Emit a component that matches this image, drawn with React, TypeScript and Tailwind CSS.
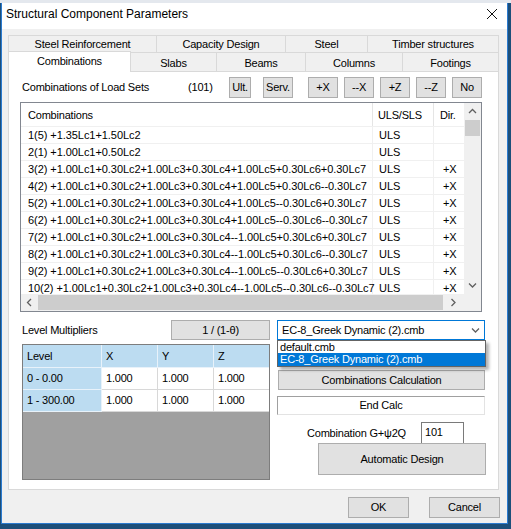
import React from 'react';

const rows: [string, string, string][] = [
  ['1(5) +1.35Lc1+1.50Lc2', 'ULS', ''],
  ['2(1) +1.00Lc1+0.50Lc2', 'ULS', ''],
  ['3(2) +1.00Lc1+0.30Lc2+1.00Lc3+0.30Lc4+1.00Lc5+0.30Lc6+0.30Lc7', 'ULS', '+X'],
  ['4(2) +1.00Lc1+0.30Lc2+1.00Lc3+0.30Lc4+1.00Lc5+0.30Lc6--0.30Lc7', 'ULS', '+X'],
  ['5(2) +1.00Lc1+0.30Lc2+1.00Lc3+0.30Lc4+1.00Lc5--0.30Lc6+0.30Lc7', 'ULS', '+X'],
  ['6(2) +1.00Lc1+0.30Lc2+1.00Lc3+0.30Lc4+1.00Lc5--0.30Lc6--0.30Lc7', 'ULS', '+X'],
  ['7(2) +1.00Lc1+0.30Lc2+1.00Lc3+0.30Lc4--1.00Lc5+0.30Lc6+0.30Lc7', 'ULS', '+X'],
  ['8(2) +1.00Lc1+0.30Lc2+1.00Lc3+0.30Lc4--1.00Lc5+0.30Lc6--0.30Lc7', 'ULS', '+X'],
  ['9(2) +1.00Lc1+0.30Lc2+1.00Lc3+0.30Lc4--1.00Lc5--0.30Lc6+0.30Lc7', 'ULS', '+X'],
  ['10(2) +1.00Lc1+0.30Lc2+1.00Lc3+0.30Lc4--1.00Lc5--0.30Lc6--0.30Lc7', 'ULS', '+X'],
];

const backTabs: [string, string][] = [
  ['Steel Reinforcement', 'w-[148px]'],
  ['Capacity Design', 'w-[129px]'],
  ['Steel', 'w-[82px]'],
  ['Timber structures', 'w-[132px]'],
];

const frontTabs: [string, string][] = [
  ['Combinations', 'w-[123px]'],
  ['Slabs', 'w-[86px]'],
  ['Beams', 'w-[89px]'],
  ['Columns', 'w-[97px]'],
  ['Footings', 'w-[96px]'],
];

const levels = [
  ['0 - 0.00', '1.000', '1.000', '1.000'],
  ['1 - 300.00', '1.000', '1.000', '1.000'],
];

// small chevron used by scrollbars and the combo box
const Chevron = ({ dir, className }: { dir: 'up' | 'down' | 'left' | 'right'; className?: string }) => {
  const d = {
    up: 'M1 6 L4.5 2.5 L8 6',
    down: 'M1 2.5 L4.5 6 L8 2.5',
    left: 'M6 1 L2.5 4.5 L6 8',
    right: 'M2.5 1 L6 4.5 L2.5 8',
  }[dir];
  return (
    <svg width="9" height="9" viewBox="0 0 9 9" className={className}>
      <path d={d} fill="none" stroke="#606060" strokeWidth="1.3" />
    </svg>
  );
};

const Btn = ({ label, className }: { label: string; className: string }) => (
  <div className={`flex items-center justify-center bg-[#e1e1e1] border border-[#adadad] text-black ${className}`}>
    {label}
  </div>
);

export default function App() {
  return (
    <div className="w-[511px] h-[529px] bg-[#1d4f7a] overflow-hidden font-['Liberation_Sans',Arial,sans-serif] text-[11px] text-black leading-none tracking-[-0.2px]">
      <div className="h-[3px] bg-[#e4e8ee]" />
      <div className="ml-[1px] w-[507px] h-[521px] border-x border-b border-[#2b7bd0] bg-[#f0f0f0] flex flex-col">
        {/* Title bar */}
        <div className="h-[26px] bg-white flex items-center justify-between pl-[4px] pr-[9px] pb-[4px]">
          <span className="text-[12px] tracking-normal">Structural Component Parameters</span>
          <svg width="12" height="12" viewBox="0 0 12 12">
            <path d="M1 1 L11 11 M11 1 L1 11" stroke="#111" strokeWidth="1" />
          </svg>
        </div>

        {/* Tab control */}
        <div className="pl-[6px] pt-[6px]">
          <div className="flex h-[17px]">
            {backTabs.map(([t, w]) => (
              <div key={t} className={`${w} border-t border-l last:border-r border-[#d9d9d9] bg-[#f0f0f0] flex items-center justify-center pt-[1px]`}>
                {t}
              </div>
            ))}
          </div>
          <div className="flex h-[19px] items-end">
            {frontTabs.map(([t, w], i) =>
              i === 0 ? (
                <div key={t} className={`${w} h-[21px] -mb-[1px] relative z-10 bg-white border-t border-l border-r border-[#d9d9d9] flex items-start justify-center pt-[4px]`}>
                  {t}
                </div>
              ) : (
                <div key={t} className={`${w} h-[19px] border-t border-r border-[#d9d9d9] bg-[#f0f0f0] flex items-center justify-center pt-[2px]`}>
                  {t}
                </div>
              )
            )}
          </div>

          {/* Tab page */}
          <div className="w-[491px] h-[419px] bg-white border border-[#d9d9d9] pl-[11px]">
            {/* Load set row */}
            <div className="flex items-center h-[21px] mt-[5px]">
              <span className="ml-[2px] w-[166px]">Combinations of Load Sets</span>
              <span className="w-[41px]">(101)</span>
              <Btn label="Ult." className="w-[22px] h-[21px]" />
              <Btn label="Serv." className="w-[30px] h-[21px] ml-[12px]" />
              <Btn label="+X" className="w-[30px] h-[21px] ml-[15px]" />
              <Btn label="--X" className="w-[30px] h-[21px] ml-[6px]" />
              <Btn label="+Z" className="w-[30px] h-[21px] ml-[6px]" />
              <Btn label="--Z" className="w-[30px] h-[21px] ml-[6px]" />
              <Btn label="No" className="w-[30px] h-[21px] ml-[6px]" />
            </div>

            {/* Combinations list */}
            <div className="mt-[4px] w-[462px] h-[210px] border border-[#828790] flex">
              <div className="w-[443px] flex flex-col">
                <div className="h-[23px] flex items-center">
                  <div className="w-[352px] h-full flex items-center pl-[7px] pt-[1px] border-r border-[#e5e5e5]">Combinations</div>
                  <div className="w-[61px] h-full flex items-center pl-[5px] pt-[1px] border-r border-[#e5e5e5]">ULS/SLS</div>
                  <div className="w-[30px] h-full flex items-center pl-[6px] pt-[1px]">Dir.</div>
                </div>
                <div className="h-[168px] overflow-hidden tracking-[-0.06px]">
                  {rows.map(([c, u, d]) => (
                    <div key={c} className="h-[17px] flex border-t border-[#f0f0f0]">
                      <div className="w-[352px] whitespace-nowrap pl-[7px] flex items-center border-r border-[#f0f0f0]">{c}</div>
                      <div className="w-[61px] pl-[6px] flex items-center border-r border-[#f0f0f0]">{u}</div>
                      <div className="w-[30px] pl-[9px] flex items-center">{d}</div>
                    </div>
                  ))}
                </div>
                <div className="h-[17px] bg-[#f0f0f0] flex items-center">
                  <div className="w-[17px] flex justify-center"><Chevron dir="left" /></div>
                  <div className="w-[405px] h-[15px] bg-[#cdcdcd]" />
                  <div className="w-[21px] flex justify-center"><Chevron dir="right" /></div>
                </div>
              </div>
              <div className="w-[17px] bg-[#f0f0f0] flex flex-col">
                <div className="h-[17px] flex items-center justify-center"><Chevron dir="up" /></div>
                <div className="ml-[1px] w-[15px] h-[16px] bg-[#cdcdcd]" />
                <div className="flex-1" />
                <div className="h-[17px] flex items-center justify-center"><Chevron dir="down" /></div>
                <div className="h-[17px]" />
              </div>
            </div>

            {/* Lower section */}
            <div className="mt-[8px] flex">
              <div className="w-[250px]">
                <div className="flex items-center h-[20px]">
                  <span className="ml-[2px] w-[149px]">Level Multipliers</span>
                  <Btn label="1 / (1-θ)" className="w-[99px] h-[20px]" />
                </div>
                <div className="ml-[2px] mt-[4px] w-[248px] h-[136px] border border-[#7d7d7d] bg-[#a0a0a0]">
                  <div className="flex h-[23px] bg-[#bcdcf1]">
                    <div className="w-[79px] pl-[4px] flex items-center border-r border-b border-[#e8f2fa]">Level</div>
                    <div className="w-[56px] pl-[4px] flex items-center border-r border-b border-[#e8f2fa]">X</div>
                    <div className="w-[56px] pl-[4px] flex items-center border-r border-b border-[#e8f2fa]">Y</div>
                    <div className="w-[55px] pl-[4px] flex items-center border-b border-[#e8f2fa]">Z</div>
                  </div>
                  {levels.map(([l, x, y, z]) => (
                    <div key={l} className="flex h-[22px]">
                      <div className="w-[79px] pl-[4px] flex items-center bg-[#bcdcf1] border-r border-b border-[#e8f2fa]">{l}</div>
                      <div className="w-[56px] pl-[4px] flex items-center bg-white border-r border-b border-[#d8d8d8]">{x}</div>
                      <div className="w-[56px] pl-[4px] flex items-center bg-white border-r border-b border-[#d8d8d8]">{y}</div>
                      <div className="w-[55px] pl-[4px] flex items-center bg-white border-b border-[#d8d8d8]">{z}</div>
                    </div>
                  ))}
                </div>
              </div>

              <div className="ml-[7px] w-[209px] relative flex flex-col">
                <div className="w-[208px] h-[20px] border border-[#0078d7] bg-white flex items-center justify-between pl-[4px] pr-[4px]">
                  <span>EC-8_Greek Dynamic (2).cmb</span>
                  <Chevron dir="down" />
                </div>
                <div className="absolute top-[20px] left-0 w-[209px] h-[27px] border border-[#646464] bg-white shadow-[3px_3px_3px_rgba(0,0,0,0.3)] z-20 flex flex-col">
                  <div className="h-[12px] pl-[2px] flex items-center">default.cmb</div>
                  <div className="h-[13px] pl-[2px] flex items-center bg-[#0078d7] text-white">EC-8_Greek Dynamic (2).cmb</div>
                </div>
                <Btn label="Combinations Calculation" className="mt-[30px] ml-[1px] w-[207px] h-[20px]" />
                <div className="mt-[6px] w-[208px] h-[19px] bg-white border-t border-l border-[#a0a0a0] border-r border-b border-r-[#e3e3e3] border-b-[#e3e3e3] flex items-center justify-center">
                  End Calc
                </div>
                <div className="mt-[7px] h-[22px] flex">
                  <span className="ml-[30px] w-[114px] flex items-center pt-[1px]">Combination G+ψ2Q</span>
                  <div className="w-[43px] h-[22px] bg-white border border-[#7a7a7a] pl-[3px] pt-[4px]">101</div>
                </div>
                <Btn label="Automatic Design" className="-mt-[1px] ml-[41px] w-[168px] h-[32px] relative" />
              </div>
            </div>
          </div>
        </div>

        {/* Dialog buttons */}
        <div className="mt-[7px] flex">
          <Btn label="OK" className="ml-[346px] w-[61px] h-[21px]" />
          <Btn label="Cancel" className="ml-[20px] w-[71px] h-[21px]" />
        </div>
      </div>
    </div>
  );
}
